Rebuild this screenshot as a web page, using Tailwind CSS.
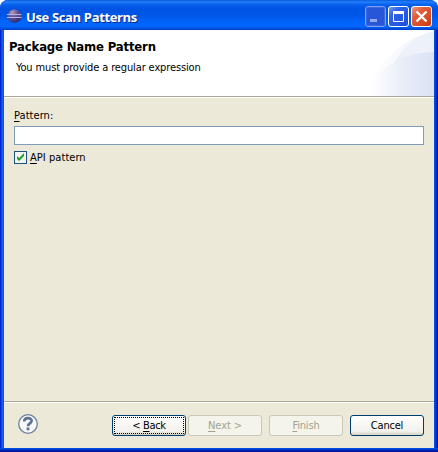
<!DOCTYPE html>
<html lang="en">
<head>
<meta charset="utf-8">
<title>Use Scan Patterns</title>
<script src="https://cdn.jsdelivr.net/npm/@tailwindcss/browser@4"></script>
</head>
<body class="bg-white overflow-hidden">
<div class="w-[438px] h-[452px] flex flex-col rounded-t-[8px] overflow-hidden bg-[#0831d9] font-['DejaVu_Sans_Condensed','DejaVu_Sans',sans-serif] text-[11px] leading-[14px] text-black">
  <header class="h-[30px] shrink-0 flex items-center pl-[7px] pr-[6px] pt-[3px] bg-[linear-gradient(180deg,#0a5be0_0%,#2380fb_7%,#0a63ef_14%,#0054e3_28%,#0055e5_50%,#0064fb_72%,#0066ff_88%,#0050e0_95%,#003dc8_100%)]">
    <svg class="w-4 h-4 shrink-0 relative -top-px" viewBox="0 0 16 16">
      <defs><radialGradient id="orb" cx=".35" cy=".25" r=".8"><stop offset="0" stop-color="#b79bb8"/><stop offset=".45" stop-color="#66579b"/><stop offset="1" stop-color="#29256b"/></radialGradient></defs>
      <circle cx="7.5" cy="8" r="6.8" fill="url(#orb)"/>
      <path d="M0 6.5H14.5M0 9.5H14.5" stroke="#b5b2dd" stroke-width="1"/>
      <path d="M1 8H14" stroke="#5c58a0" stroke-width="1"/>
    </svg>
    <h1 class="ml-[3px] grow whitespace-nowrap font-['Open_Sans','Noto_Sans',sans-serif] font-bold text-[13px] leading-[18px] tracking-[-0.35px] text-white [text-shadow:1px_1px_0_#0a2a90]">Use Scan Patterns</h1>
    <div class="flex gap-[2px]">
      <svg class="w-[21px] h-[21px]" viewBox="0 0 21 21">
        <defs><linearGradient id="blue" x1="0" y1="0" x2="1" y2="1"><stop offset="0" stop-color="#7aa0f5"/><stop offset=".3" stop-color="#2f62e6"/><stop offset="1" stop-color="#1c4ddd"/></linearGradient></defs>
        <rect x=".5" y=".5" width="20" height="20" rx="2.5" fill="#2856d9" stroke="#7f9ff0"/>
        <rect x="1.5" y="1.5" width="18" height="18" rx="1.5" fill="none" stroke="#3d69dd"/>
        <rect x="5" y="13" width="7" height="3" fill="#93a9ee"/>
      </svg>
      <svg class="w-[21px] h-[21px]" viewBox="0 0 21 21">
        <rect x=".5" y=".5" width="20" height="20" rx="2.5" fill="url(#blue)" stroke="#fff"/>
        <path d="M5.5 6V15.5H15.5V6" fill="none" stroke="#fff"/>
        <rect x="5" y="5" width="11" height="3" fill="#fff"/>
      </svg>
      <svg class="w-[21px] h-[21px]" viewBox="0 0 21 21">
        <defs><linearGradient id="red" x1="0" y1="0" x2="1" y2="1"><stop offset="0" stop-color="#ee9b83"/><stop offset=".35" stop-color="#e05d38"/><stop offset="1" stop-color="#cc3a10"/></linearGradient></defs>
        <rect x=".5" y=".5" width="20" height="20" rx="2.5" fill="url(#red)" stroke="#fff"/>
        <path d="M5.5 5.5L15.5 15.5M15.5 5.5L5.5 15.5" stroke="#fff" stroke-width="2.4"/>
      </svg>
    </div>
  </header>
  <div class="grow min-h-0 flex bg-[linear-gradient(90deg,#0019cf_0px,#0831d9_1px,#1661e8_2px,#0055e5_4px,#0055e5_434px,#0048e8_435px,#0030d0_436px,#00138c_438px)] px-1">
    <div class="w-full flex flex-col bg-[#ece9d8]">
      <section class="relative h-[66px] shrink-0 bg-white pl-[5px] pt-[8px]">
        <svg class="absolute right-0 top-0 w-[75px] h-[66px]" viewBox="0 0 75 66">
          <defs>
            <linearGradient id="far" gradientUnits="userSpaceOnUse" x1="5" y1="0" x2="75" y2="0"><stop offset="0" stop-color="#fff"/><stop offset=".4" stop-color="#fafbfe"/><stop offset="1" stop-color="#e9eef9"/></linearGradient>
            <linearGradient id="near" gradientUnits="userSpaceOnUse" x1="15" y1="0" x2="75" y2="0"><stop offset="0" stop-color="#dce3f5" stop-opacity="0"/><stop offset="1" stop-color="#dce3f5"/></linearGradient>
          </defs>
          <path d="M3 66C17 37 38 10 75 1V66Z" fill="url(#far)"/>
          <path d="M34 34C43 19 57 6 75 1V22C60 23 46 28 34 34Z" fill="#edf1fa"/>
          <path d="M3 66C14 43 39 23 75 22V66Z" fill="url(#near)"/>
        </svg>
        <h2 class="relative font-['DejaVu_Sans_Condensed','DejaVu_Sans',sans-serif] font-bold text-[13px] leading-[18px] tracking-[-0.17px] whitespace-nowrap">Package Name Pattern</h2>
        <p class="relative ml-[7px] mt-[5px] tracking-[-0.13px] whitespace-nowrap">You must provide a regular expression</p>
      </section>
      <div class="h-[2px] shrink-0 border-t border-[#aca899] bg-white"></div>
      <main class="grow px-[10px] pt-[11px]">
        <label for="pattern" class="block tracking-[0.05px]"><u class="underline-offset-2">P</u>attern:</label>
        <input id="pattern" type="text" class="block mt-[3px] w-full h-[19px] border border-[#7f9db9] bg-white outline-none">
        <div class="mt-[5px] flex items-center gap-[3px]">
          <svg class="w-[13px] h-[13px]" viewBox="0 0 13 13">
            <rect x=".5" y=".5" width="12" height="12" fill="#f3f3ef" stroke="#1c5180"/>
            <path d="M3 5V8L5 10L10 5V2L5 7Z" fill="#21a121"/>
          </svg>
          <span class="pt-px tracking-[0.05px]"><u class="underline-offset-2">A</u>PI pattern</span>
        </div>
      </main>
      <div class="h-[2px] shrink-0 border-t border-[#aca899] bg-white"></div>
      <footer class="h-[45px] shrink-0 flex items-center pl-[14px] pr-[10px]">
        <svg class="w-5 h-5 mr-auto mb-[3px]" viewBox="0 0 20 20">
          <circle cx="10" cy="10" r="9.3" fill="#f7f7f5" stroke="#6b7f9f" stroke-width="1.3"/>
          <path d="M6.2 7.5C6.2 3 13.8 3.2 13.6 6.9C13.4 9.5 10 9.2 10 12.2" fill="none" stroke="#5d7395" stroke-width="2.7"/>
          <rect x="8.6" y="13.5" width="2.8" height="2.8" fill="#5d7395"/>
        </svg>
        <button class="relative w-[74px] h-[21px] rounded-[3px] border border-[#003c74] bg-[linear-gradient(#fff,#f2f1ec_80%,#d8d2bf)] tracking-[-0.35px]"><span class="absolute inset-px border border-dotted border-black"></span>&lt; <u class="underline-offset-2">B</u>ack</button>
        <button class="ml-[2px] w-[74px] h-[21px] rounded-[3px] border border-[#c9c7ba] bg-[#f5f4ea] text-[#a1a192] tracking-[-0.1px]"><u class="underline-offset-2">N</u>ext &gt;</button>
        <button class="ml-[7px] w-[74px] h-[21px] rounded-[3px] border border-[#c9c7ba] bg-[#f5f4ea] text-[#a1a192] tracking-[-0.15px]"><u class="underline-offset-2">F</u>inish</button>
        <button class="ml-[7px] w-[74px] h-[21px] rounded-[3px] border border-[#003c74] bg-[linear-gradient(#fff,#f2f1ec_80%,#d8d2bf)] tracking-[-0.2px]">Cancel</button>
      </footer>
    </div>
  </div>
  <div class="h-1 shrink-0 bg-[linear-gradient(#0055e5_0px,#0046df_1px,#0026b8_2px,#00138c_4px)]"></div>
</div>
</body>
</html>
